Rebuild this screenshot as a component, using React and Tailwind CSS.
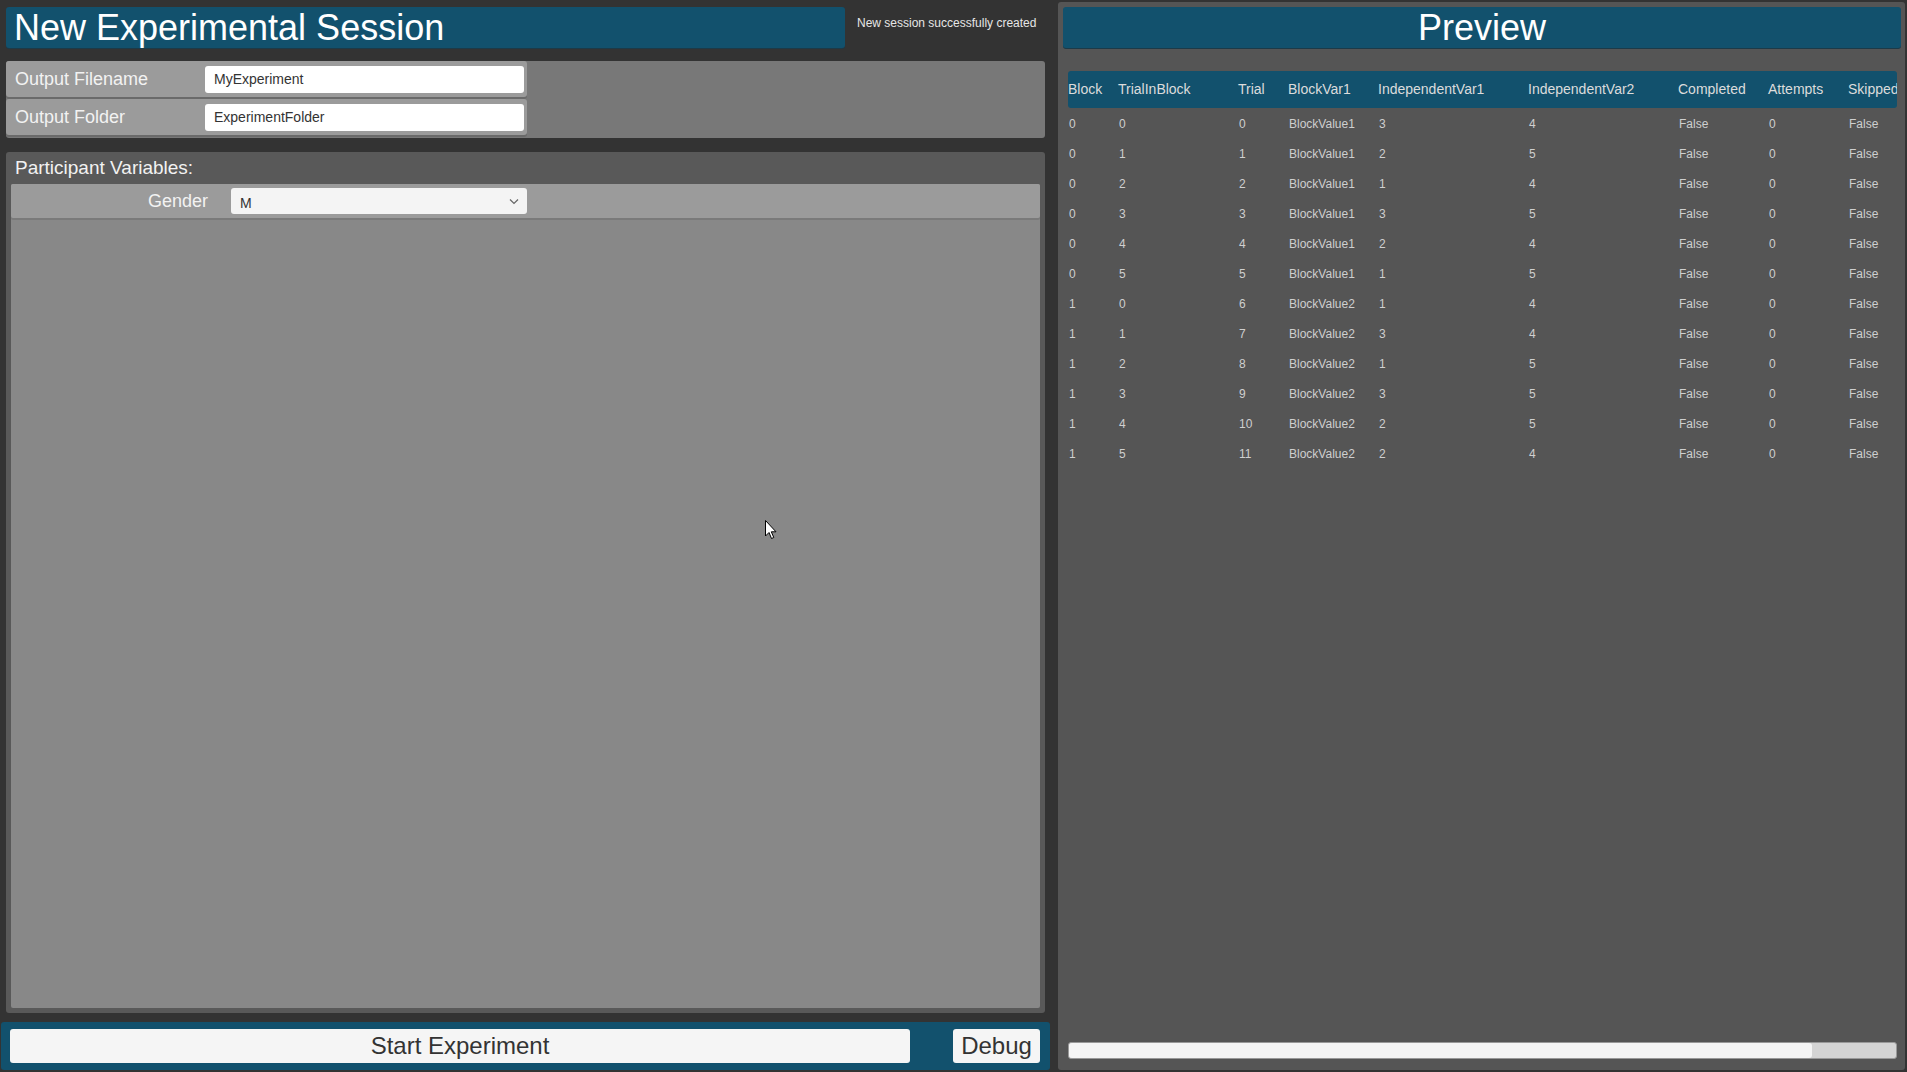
import React from 'react';

const columns = [
  { key: 'block', label: 'Block', w: 'w-[50px]' },
  { key: 'tib', label: 'TrialInBlock', w: 'w-[120px]' },
  { key: 'trial', label: 'Trial', w: 'w-[50px]' },
  { key: 'bv', label: 'BlockVar1', w: 'w-[90px]' },
  { key: 'iv1', label: 'IndependentVar1', w: 'w-[150px]' },
  { key: 'iv2', label: 'IndependentVar2', w: 'w-[150px]' },
  { key: 'done', label: 'Completed', w: 'w-[90px]' },
  { key: 'att', label: 'Attempts', w: 'w-[80px]' },
  { key: 'skip', label: 'Skipped', w: 'w-[90px]' },
];

const iv1 = [3, 2, 1, 3, 2, 1, 1, 3, 1, 3, 2, 2];
const iv2 = [4, 5, 4, 5, 4, 5, 4, 4, 5, 5, 5, 4];

const rows = iv1.map((v, i) => ({
  block: i < 6 ? 0 : 1,
  tib: i % 6,
  trial: i,
  bv: i < 6 ? 'BlockValue1' : 'BlockValue2',
  iv1: v,
  iv2: iv2[i],
  done: 'False',
  att: 0,
  skip: 'False',
}));

const FieldRow = ({ label, value }) => (
  <div className="flex items-center h-[36px] w-[521px] bg-[#9b9b9b] rounded-[3px] shadow-[0_2px_0_#6a6a6a]">
    <div className="w-[199px] pl-[9px] pt-[1px] text-[18px] text-[#f2f2f2]">{label}</div>
    <div className="w-[319px] h-[27px] bg-white rounded-[3px] flex items-center pl-[9px] text-[14px] text-[#333]">
      {value}
    </div>
  </div>
);

const Cursor = () => (
  <svg className="absolute left-[765px] top-[520px]" width="13" height="20" viewBox="0 0 13 20">
    <path d="M0.5 0.5 L0.5 16 L4 12.5 L6.5 18.5 L8.8 17.5 L6.3 11.8 L11 11.8 Z" fill="white" stroke="black" strokeWidth="1" />
  </svg>
);

export default function App() {
  return (
    <div className="relative w-[1907px] h-[1072px] bg-[#333333] flex overflow-hidden" style={{ fontFamily: '"Liberation Sans", Arial, sans-serif' }}>
      <div className="w-[1052px] flex flex-col">
        <div className="flex items-start pt-[7px] pl-[6px]">
          <div className="w-[839px] h-[41px] bg-[#12516d] rounded-[3px] shadow-[0_1px_0_#1d3a48] flex items-center pl-[8px]">
            <span className="text-[36px] text-white leading-none">New Experimental Session</span>
          </div>
          <div className="ml-[12px] mt-[7px] text-[12px] text-[#e6e6e6]">New session successfully created</div>
        </div>

        <div className="ml-[6px] mt-[13px] w-[1039px] h-[77px] bg-[#787878] rounded-[3px] flex flex-col gap-[2px]">
          <FieldRow label="Output Filename" value="MyExperiment" />
          <FieldRow label="Output Folder" value="ExperimentFolder" />
        </div>

        <div className="ml-[6px] mt-[14px] w-[1039px] h-[861px] bg-[#595959] rounded-[3px] flex flex-col px-[5px] pb-[5px]">
          <div className="h-[32px] flex items-center pl-[4px] text-[19px] text-[#f2f2f2]">Participant Variables:</div>
          <div className="flex-1 bg-[#888888] rounded-[2px]">
            <div className="h-[34px] bg-[#9b9b9b] rounded-[2px] shadow-[0_2px_0_#7a7a7a] flex items-center">
              <div className="w-[220px] pr-[23px] text-right text-[18px] text-[#f2f2f2]">Gender</div>
              <div className="w-[296px] h-[26px] bg-[#f4f4f4] rounded-[3px] flex items-center justify-between pl-[9px] pr-[8px]">
                <span className="text-[14px] text-[#333] mt-[4px]">M</span>
                <svg width="10" height="7" viewBox="0 0 10 7">
                  <path d="M1 1.5 L5 5.5 L9 1.5" fill="none" stroke="#666" strokeWidth="1.2" />
                </svg>
              </div>
            </div>
          </div>
        </div>

        <div className="ml-[1px] mt-[9px] w-[1049px] h-[48px] bg-[#12516d] rounded-[3px] flex items-center pl-[9px]">
          <div className="w-[900px] h-[34px] bg-[#f5f5f5] rounded-[3px] flex items-center justify-center text-[24px] text-[#333]">
            Start Experiment
          </div>
          <div className="ml-[43px] w-[87px] h-[34px] bg-[#f5f5f5] rounded-[3px] flex items-center justify-center text-[24px] text-[#333]">
            Debug
          </div>
        </div>
      </div>

      <div className="ml-[6px] mt-[2px] w-[847px] h-[1068px] bg-[#555555] rounded-[3px] flex flex-col pl-[5px] pr-[4px]">
        <div className="mt-[5px] h-[41px] bg-[#12516d] rounded-[3px] shadow-[0_1px_0_#1d3a48] flex items-center justify-center">
          <span className="text-[36px] text-white leading-none">Preview</span>
        </div>
        <div className="ml-[5px] mr-[4px] mt-[23px] overflow-hidden">
          <div className="flex h-[37px] items-center bg-[#12516d] rounded-[3px] text-[14px] text-[#dcdcdc] whitespace-nowrap">
            {columns.map((c) => (
              <div key={c.key} className={`${c.w} shrink-0`}>{c.label}</div>
            ))}
          </div>
          {rows.map((r, i) => (
            <div key={i} className="flex h-[30px] items-center pt-[1px] text-[12px] text-[#cfcfcf] whitespace-nowrap">
              {columns.map((c) => (
                <div key={c.key} className={`${c.w} shrink-0 pl-[1px]`}>{r[c.key]}</div>
              ))}
            </div>
          ))}
        </div>
        <div className="flex-1" />
        <div className="ml-[5px] mr-[4px] mb-[11px] h-[17px] bg-[#d4d4d4] rounded-[3px] flex border border-[#999]">
          <div className="w-[743px] bg-[#f5f5f5] rounded-[3px]" />
        </div>
      </div>

      <Cursor />
    </div>
  );
}
